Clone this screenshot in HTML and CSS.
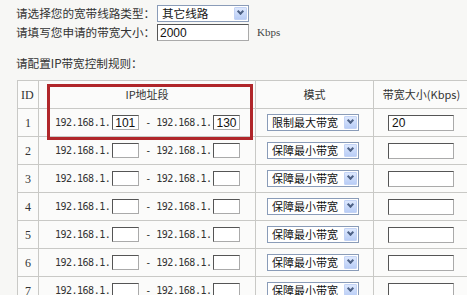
FILE: index.html
```html
<!DOCTYPE html>
<html lang="zh">

<head>
    <meta charset="UTF-8">
    <title>IP带宽控制</title>
    <link rel="stylesheet" href="styles.css">
</head>

<body>
    <div class="form-row">
        <span class="label">请选择您的宽带线路类型：</span>
        <div class="combo"><span>其它线路</span><i class="arrow"></i></div>
    </div>
    <div class="form-row">
        <span class="label">请填写您申请的带宽大小：</span>
        <div class="text-box wide">2000</div>
        <span class="unit">Kbps</span>
    </div>

    <p class="section-title">请配置IP带宽控制规则：</p>

    <div class="table-wrap">
        <table class="rules">
            <colgroup>
                <col class="col-id">
                <col class="col-ip">
                <col class="col-mode">
                <col class="col-bw">
            </colgroup>
            <tr>
                <th class="cell-id">ID</th>
                <th>IP地址段</th>
                <th>模式</th>
                <th>带宽大小(Kbps)</th>
            </tr>
            <tr>
                <td class="cell-id">1</td>
                <td class="cell-ip"><span class="ip">192.168.1.</span><span class="text-box ip-box">101</span><span class="dash">-</span><span class="ip">192.168.1.</span><span class="text-box ip-box">130</span></td>
                <td><div class="combo mode"><span>限制最大带宽</span><i class="arrow"></i></div></td>
                <td><div class="text-box bw-box">20</div></td>
            </tr>
            <tr>
                <td class="cell-id">2</td>
                <td class="cell-ip"><span class="ip">192.168.1.</span><span class="text-box ip-box"></span><span class="dash">-</span><span class="ip">192.168.1.</span><span class="text-box ip-box"></span></td>
                <td><div class="combo mode"><span>保障最小带宽</span><i class="arrow"></i></div></td>
                <td><div class="text-box bw-box"></div></td>
            </tr>
            <tr>
                <td class="cell-id">3</td>
                <td class="cell-ip"><span class="ip">192.168.1.</span><span class="text-box ip-box"></span><span class="dash">-</span><span class="ip">192.168.1.</span><span class="text-box ip-box"></span></td>
                <td><div class="combo mode"><span>保障最小带宽</span><i class="arrow"></i></div></td>
                <td><div class="text-box bw-box"></div></td>
            </tr>
            <tr>
                <td class="cell-id">4</td>
                <td class="cell-ip"><span class="ip">192.168.1.</span><span class="text-box ip-box"></span><span class="dash">-</span><span class="ip">192.168.1.</span><span class="text-box ip-box"></span></td>
                <td><div class="combo mode"><span>保障最小带宽</span><i class="arrow"></i></div></td>
                <td><div class="text-box bw-box"></div></td>
            </tr>
            <tr>
                <td class="cell-id">5</td>
                <td class="cell-ip"><span class="ip">192.168.1.</span><span class="text-box ip-box"></span><span class="dash">-</span><span class="ip">192.168.1.</span><span class="text-box ip-box"></span></td>
                <td><div class="combo mode"><span>保障最小带宽</span><i class="arrow"></i></div></td>
                <td><div class="text-box bw-box"></div></td>
            </tr>
            <tr>
                <td class="cell-id">6</td>
                <td class="cell-ip"><span class="ip">192.168.1.</span><span class="text-box ip-box"></span><span class="dash">-</span><span class="ip">192.168.1.</span><span class="text-box ip-box"></span></td>
                <td><div class="combo mode"><span>保障最小带宽</span><i class="arrow"></i></div></td>
                <td><div class="text-box bw-box"></div></td>
            </tr>
            <tr>
                <td class="cell-id">7</td>
                <td class="cell-ip"><span class="ip">192.168.1.</span><span class="text-box ip-box"></span><span class="dash">-</span><span class="ip">192.168.1.</span><span class="text-box ip-box"></span></td>
                <td><div class="combo mode"><span>保障最小带宽</span><i class="arrow"></i></div></td>
                <td><div class="text-box bw-box"></div></td>
            </tr>
        </table>

        <!-- 红色标注框 -->
        <div class="highlight"></div>
    </div>
</body>

</html>
```

FILE: styles.css
```css
html {
    overflow: hidden;
}

body {
    margin: 0;
    padding: 5px 0 0 16px;
    background-color: #f7f7f5;
    color: #222;
    font-family: "Noto Sans CJK SC", "Liberation Sans", sans-serif;
    font-size: 11.6px;
    line-height: 1;
}

.form-row {
    display: flex;
    align-items: center;
    height: 17px;
    margin-bottom: 2px;
    white-space: nowrap;
}

.label {
    width: 141px;
    color: #333;
}

.unit {
    margin-left: 8px;
    font-family: "Liberation Serif", serif;
    font-size: 11px;
    color: #444;
}

/* 下拉框 */
.combo {
    display: flex;
    align-items: center;
    justify-content: space-between;
    box-sizing: border-box;
    width: 92px;
    height: 17px;
    padding: 0 1px 0 4px;
    background-color: #fff;
    border: 1px solid #8a9cb8;
    color: #111;
    white-space: nowrap;
    overflow: hidden;
}

.combo span {
    font-size: 11.6px;
}

.arrow {
    position: relative;
    flex: none;
    width: 13px;
    height: 13px;
    background: linear-gradient(#dde8fd, #b9cdf6);
    border: 1px solid #c3d3f5;
    box-sizing: border-box;
    border-radius: 1px;
}

.arrow::after {
    content: "";
    position: absolute;
    left: 3px;
    top: 1px;
    width: 3px;
    height: 3px;
    border-right: 2px solid #4d6185;
    border-bottom: 2px solid #4d6185;
    transform: rotate(45deg);
}

/* 文本框 */
.text-box {
    box-sizing: border-box;
    background-color: #fff;
    border: 1px solid #555;
    border-right-color: #aaa;
    border-bottom-color: #aaa;
    font-family: "Liberation Sans", sans-serif;
    font-size: 12px;
    color: #111;
    text-align: left;
}

.text-box.wide {
    width: 92px;
    height: 17px;
    padding: 2px 2px;
}

.section-title {
    margin: 17px 0 0;
    height: 14px;
    color: #333;
}

.table-wrap {
    position: relative;
    margin: 8px 0 0 1px;
}

.rules {
    border-collapse: collapse;
    table-layout: fixed;
    width: 452px;
    background-color: #fbfbfa;
}

.col-id {
    width: 21px;
}

.col-ip {
    width: 217px;
}

.col-mode {
    width: 118px;
}

.col-bw {
    width: 96px;
}

.rules th,
.rules td {
    height: 27px;
    padding: 0;
    border: 1px solid #c9c9c6;
    font-weight: normal;
    text-align: center;
    color: #333;
    white-space: nowrap;
}

.rules th {
    font-size: 11px;
}

.rules .cell-id {
    text-align: left;
    padding-left: 3px;
    font-family: "Liberation Serif", serif;
    font-size: 12px;
}

.rules td.cell-id {
    padding-left: 7px;
}

.rules td.cell-ip {
    text-align: left;
    padding-left: 16px;
}

.ip {
    font-family: "DejaVu Sans Mono", monospace;
    font-size: 10px;
    letter-spacing: -0.5px;
    color: #333;
}

.ip-box {
    display: inline-block;
    vertical-align: middle;
    width: 27px;
    height: 15px;
    margin-left: 2px;
    padding: 1px 2px;
}

.dash {
    display: inline-block;
    margin: 0 5px 0 6px;
    font-family: "DejaVu Sans Mono", monospace;
    font-size: 10px;
}

.mode {
    margin-left: 11px;
}

.mode span {
    font-size: 11px;
}

.bw-box {
    width: 66px;
    height: 16px;
    margin-left: 14px;
    padding: 1px 3px;
}

.highlight {
    position: absolute;
    left: 30px;
    top: 4px;
    width: 206px;
    height: 56px;
    border: 3px solid #b0262a;
    box-sizing: border-box;
}
```
